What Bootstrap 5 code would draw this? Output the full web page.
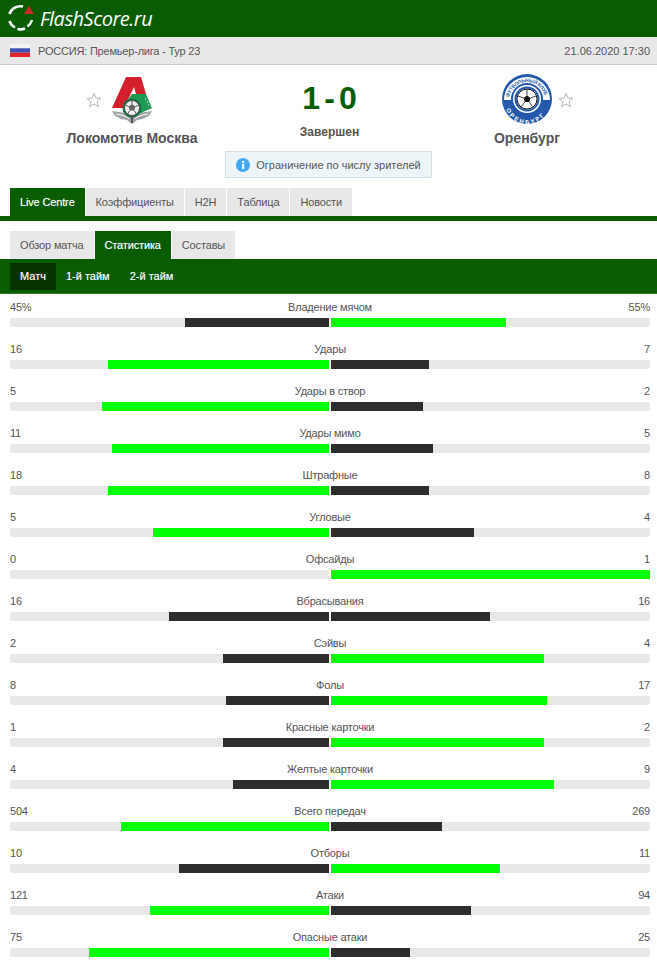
<!doctype html>
<html lang="ru"><head><meta charset="utf-8"><title>FlashScore.ru</title>
<link href="https://cdn.jsdelivr.net/npm/bootstrap@5.3.0/dist/css/bootstrap.min.css" rel="stylesheet">
<style>
body{font-family:"Liberation Sans",sans-serif;font-size:11px;letter-spacing:-.2px;color:#555;background:#fff;line-height:14px;overflow:hidden}
.fs-top{height:37px;background:#0a5c00;padding-left:8px}
.fs-brand{font-family:"Open Sans",sans-serif;font-style:italic;font-size:20px;color:#fff;line-height:37px;letter-spacing:-.5px}
.fs-sub{height:28px;background:#e8e8e8;border-bottom:1px solid #ccc;padding:0 7px 0 10px}
.fs-date{letter-spacing:0}
.fs-match{height:86px;padding-top:9px}
.fs-team{width:264px;flex:none}
.fs-mid{width:131px;flex:none}
.fs-logo{position:relative;height:50px}
.fs-star{position:absolute;top:18px}
.fs-name{font:bold 14px/16px "Liberation Sans",sans-serif;letter-spacing:0;color:#555;margin-top:6px}
.fs-score{font:bold 32px/36px "Liberation Sans",sans-serif;letter-spacing:0;color:#0a5c00;margin-top:6px;word-spacing:-4.8px}
.fs-status{font:bold 12px/14px "Liberation Sans",sans-serif;letter-spacing:0;color:#555;margin-top:9px}
.fs-note{width:207px;height:27px;margin:0 auto;background:#eef5f9;border:1px solid #d3dee5;gap:6px;letter-spacing:0}
.fs-tabs{padding-left:10px;gap:1px}
.fs-main{margin-top:10px;border-bottom:5px solid #0a5c00;height:33px}
.fs-second{margin-top:10px;height:28px}
.fs-tab{height:28px;line-height:28px;padding:0 10px;background:#e8e8e8;color:#555;letter-spacing:-.15px}
.fs-tab.fs-on{background:#0a5c00;color:#fff;text-shadow:0 0 1px rgba(255,255,255,.45)}
.fs-bar3{height:35px;background:#0a5c00;border-bottom:1px solid #2f7d22;padding:4px 10px 0;gap:0}
.fs-per{height:27px;line-height:27px;padding:0 10px;color:#fff;letter-spacing:0;text-shadow:0 0 1px rgba(255,255,255,.45)}
.fs-per.fs-on{background:#063300}
.fs-stats{padding:0 7px 0 10px}
.fs-row{height:42px;padding-top:6px}
.fs-vals{height:14px}
.fs-track{height:9px;margin-top:4px;gap:2px}
.fs-half{flex:1 1 0;background:#e8e8e8;display:flex}
.fs-half:first-child{justify-content:flex-end;border-radius:2px 0 0 2px}
.fs-half:last-child{border-radius:0 2px 2px 0}
.fs-g{background:#0f0}
.fs-d{background:#2d2d2d}
</style></head><body>
<header class="fs-top d-flex align-items-center gap-1">
<svg width="28" height="30" viewBox="0 0 28 30"><g fill="none" stroke="#fff" stroke-width="2.5"><path d="M1.500 10A11.500 11.500 0 0 1 15 2.500"/><path d="M1.500 17A11.500 11.500 0 0 0 7 23.500"/><path d="M9.500 25A11.500 11.500 0 0 0 17 24.500"/><path d="M19.500 22.500A11.500 11.500 0 0 0 24 16"/></g><path d="M21 2l-5 8h10z" fill="#cc2a2a"/></svg>
<span class="fs-brand">FlashScore.ru</span>
</header>
<div class="fs-sub d-flex align-items-center justify-content-between">
<span class="d-flex align-items-center gap-2"><svg width="20" height="13" viewBox="0 0 20 13"><rect width="20" height="4.300" fill="#f4f4f4"/><rect y="4.300" width="20" height="4.400" fill="#3c50b4"/><rect y="8.700" width="20" height="4.300" fill="#e0242c"/></svg><span>РОССИЯ: Премьер-лига - Тур 23</span></span>
<span class="fs-date">21.06.2020 17:30</span>
</div>
<section class="fs-match d-flex">
<div class="fs-team text-center">
<div class="fs-logo"><span class="fs-star" style="left:86px"><svg width="16" height="16" viewBox="0 0 16 16"><path d="M8 1.500l2 4.500 4.800.5-3.600 3.200 1 4.800L8 12l-4.200 2.500 1-4.800L1.200 6.500 6 6z" fill="#fff" stroke="#b5b5b5"/></svg></span>
<svg width="42" height="50" viewBox="0 0 42 50"><g transform="translate(0 1)"><path d="M1 36Q21 40 41 36Q38 44 26 45L21 49L16 45Q4 44 1 36z" fill="#9fa4a7"/><path d="M5 39Q14 40 18 44M37 39Q28 40 24 44" stroke="#fff" fill="none"/><path d="M15 2H30L35 19H25L23 12L13 33H1Z" fill="#d3202c"/><path d="M21 19H35L41 33L30 38H14L15 27Z" fill="#1f9a55"/><path d="M34 24h1M36 27h1M37 30h1" stroke="#fff"/><circle cx="21" cy="33" r="9.500" fill="#14703c"/><circle cx="21" cy="33" r="7.500" fill="#efefef" stroke="#555"/><path d="M21 29l3.500 2.500-1.300 4h-4.400l-1.300-4z" fill="#666"/><path d="M21 25.500V29M14.500 30l3 1.500M27.500 30l-3 1.500M16.500 39l2.300-3.500M25.500 39l-2.300-3.500" stroke="#555"/><rect x="20" y="41" width="2" height="7" fill="#555"/></g></svg></div>
<div class="fs-name">Локомотив Москва</div>
</div>
<div class="fs-mid text-center">
<div class="fs-score">1 - 0</div>
<div class="fs-status">Завершен</div>
</div>
<div class="fs-team text-center">
<div class="fs-logo"><svg width="50" height="50" viewBox="0 0 50 50"><defs><path id="fs-arc1" d="M7 26a18 18 0 0 1 36 0"/><path id="fs-arc2" d="M3 28a22 22 0 0 0 44 0"/></defs><circle cx="25" cy="25" r="25" fill="#2459ab"/><path d="M2 26a23 23 0 0 1 46 0H40a15 15 0 0 0-30 0z" fill="#fff"/><text font-family="Liberation Sans" font-size="5" font-weight="bold" fill="#2459ab"><textPath href="#fs-arc1" startOffset="5%">ФУТБОЛЬНЫЙ КЛУБ</textPath></text><text font-family="Liberation Sans" font-size="6" font-weight="bold" fill="#fff" letter-spacing="2"><textPath href="#fs-arc2" startOffset="11%">ОРЕНБУРГ</textPath></text><circle cx="25" cy="25" r="16" fill="#2459ab"/><circle cx="25" cy="25" r="14" fill="#fff"/><circle cx="25" cy="25" r="12.500" fill="#2459ab"/><circle cx="25" cy="25" r="10.500" fill="#fff"/><circle cx="25" cy="25" r="10" fill="#fff" stroke="#111"/><path d="M25 21.500l3.500 2.500-1.300 4h-4.400L21.500 24z" fill="#111"/><path d="M25 15.500v6M16 22l5.500 2M34 22l-5.500 2M19.500 32.500l3.300-4.500M30.500 32.500l-3.300-4.500" stroke="#111" stroke-width=".8"/></svg><span class="fs-star" style="left:163px"><svg width="16" height="16" viewBox="0 0 16 16"><path d="M8 1.500l2 4.500 4.800.5-3.600 3.200 1 4.800L8 12l-4.200 2.500 1-4.800L1.200 6.500 6 6z" fill="#fff" stroke="#b5b5b5"/></svg></span></div>
<div class="fs-name">Оренбург</div>
</div>
</section>
<div class="fs-note d-flex align-items-center justify-content-center"><svg width="14" height="14" viewBox="0 0 14 14"><circle cx="7" cy="7" r="7" fill="#3fa9f5"/><rect x="6" y="6" width="2.200" height="5" fill="#fff"/><circle cx="7.100" cy="4" r="1.300" fill="#fff"/></svg><span>Ограничение по числу зрителей</span></div>
<nav class="fs-tabs fs-main d-flex">
<a class="fs-tab fs-on text-decoration-none">Live Centre</a><a class="fs-tab text-decoration-none">Коэффициенты</a><a class="fs-tab text-decoration-none">H2H</a><a class="fs-tab text-decoration-none">Таблица</a><a class="fs-tab text-decoration-none">Новости</a>
</nav>
<nav class="fs-tabs fs-second d-flex">
<a class="fs-tab text-decoration-none">Обзор матча</a><a class="fs-tab fs-on text-decoration-none">Статистика</a><a class="fs-tab text-decoration-none">Составы</a>
</nav>
<nav class="fs-bar3 d-flex">
<a class="fs-per fs-on text-decoration-none">Матч</a><a class="fs-per text-decoration-none">1-й тайм</a><a class="fs-per text-decoration-none">2-й тайм</a>
</nav>
<main class="fs-stats" id="fs-list"></main>
<script src="https://cdn.jsdelivr.net/npm/bootstrap@5.3.0/dist/js/bootstrap.bundle.min.js"></script>
<script>
var d=[["45%","Владение мячом","55%",144,175,0],["16","Удары","7",221,98,1],["5","Удары в створ","2",227,92,1],["11","Удары мимо","5",217,102,1],["18","Штрафные","8",221,98,1],["5","Угловые","4",176,143,1],["0","Офсайды","1",0,319,0],["16","Вбрасывания","16",160,159,2],["2","Сэйвы","4",106,213,0],["8","Фолы","17",103,216,0],["1","Красные карточки","2",106,213,0],["4","Желтые карточки","9",96,223,0],["504","Всего передач","269",208,111,1],["10","Отборы","11",150,169,0],["121","Атаки","94",179,140,1],["75","Опасные атаки","25",240,79,1]];
document.getElementById("fs-list").innerHTML=d.map(function(r){
var lc=r[5]==1?"fs-g":"fs-d",rc=r[5]==0?"fs-g":"fs-d";
return '<div class="fs-row"><div class="fs-vals d-flex justify-content-between position-relative"><span>'+r[0]+'</span><span class="position-absolute start-50 translate-middle-x text-nowrap">'+r[1]+'</span><span>'+r[2]+'</span></div><div class="fs-track d-flex"><div class="fs-half"><div class="'+lc+'" style="width:'+r[3]+'px"></div></div><div class="fs-half"><div class="'+rc+'" style="width:'+r[4]+'px"></div></div></div></div>';
}).join("");
</script>
</body></html>
